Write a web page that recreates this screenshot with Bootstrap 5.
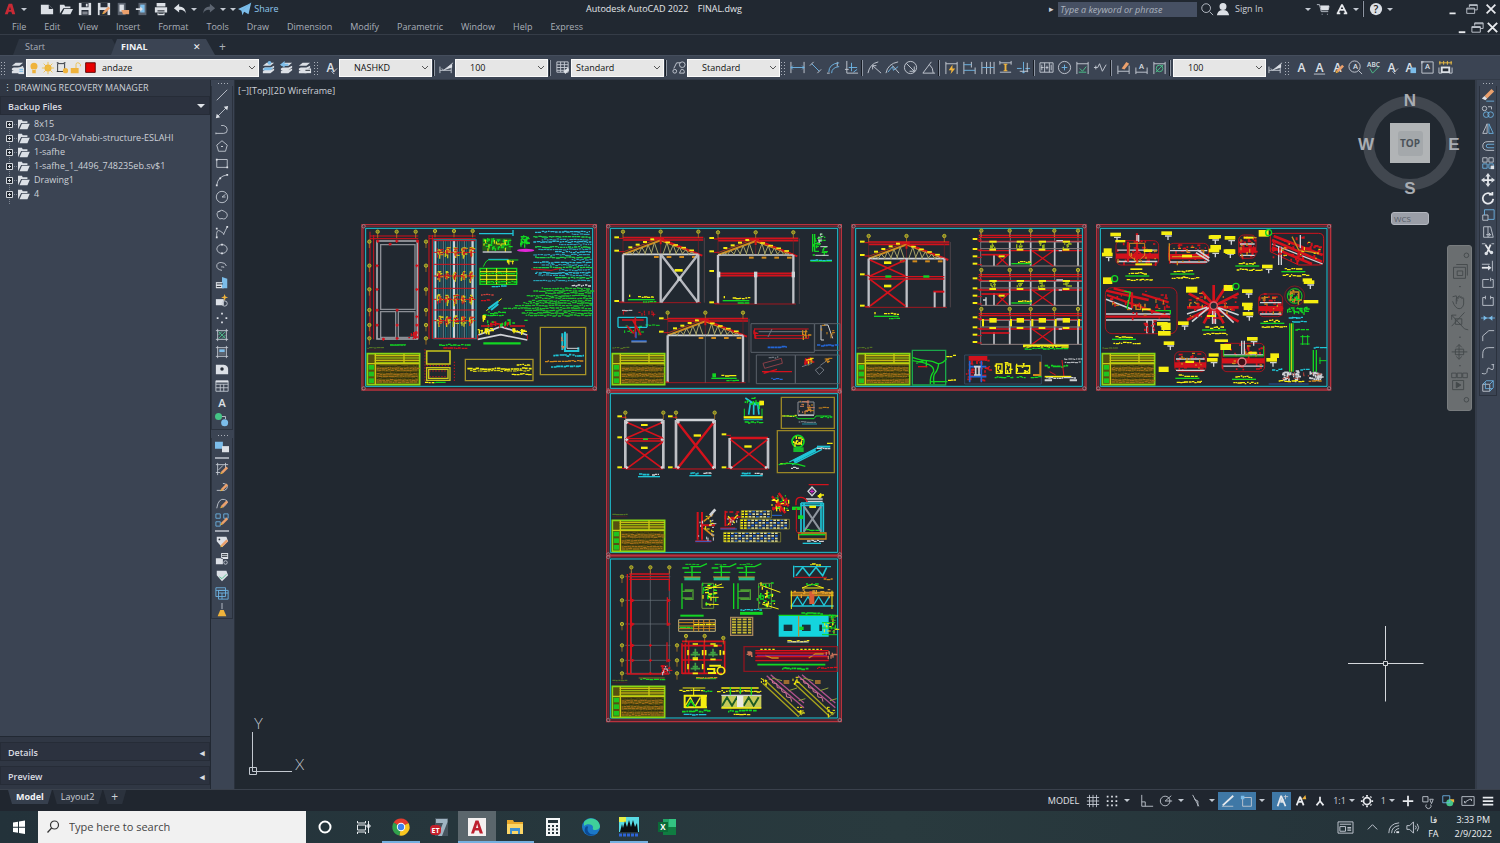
<!DOCTYPE html>
<html lang="en">
<head>
<meta charset="utf-8">
<meta name="viewport" content="width=device-width, initial-scale=1">
<title>Autodesk AutoCAD 2022 - FINAL.dwg</title>
<link href="https://cdn.jsdelivr.net/npm/bootstrap@5.3.0/dist/css/bootstrap.min.css" rel="stylesheet">
<style>
:root{--ink:#212831;--panel:#3b4453;--bar:#303744;--txt:#cdd1d8;--dim:#a9afb9}
body{font:9px/14px "Open Sans","Noto Sans",sans-serif;background:var(--ink);color:var(--txt);overflow:hidden}
button{border:0;background:none;color:inherit;padding:0;font:inherit;display:flex;align-items:center;justify-content:center;flex:none}
svg{display:block;overflow:visible}
a{color:inherit;text-decoration:none}
.ic{width:15px;height:15px;fill:none;stroke:#c3c9d2;stroke-width:1}
.ic .b{stroke:#6db3e3}.ic .y{stroke:#edbe45}.ic .g{stroke:#4dc08a}.ic .k{stroke:#20262f}.ic .W{stroke:#e8eaee;stroke-width:2}
.ic .fw{fill:#dce0e6;stroke:none}.ic .fb{fill:#7cbdea;stroke:none}.ic .fy{fill:#efb33c;stroke:none}.ic .fg{fill:#45c486;stroke:none}.ic .fr{fill:#c92a35;stroke:none}.ic .fk{fill:#262d38;stroke:none}.ic .fd{fill:#5c6470;stroke:none}.ic .fo{fill:#eba06c;stroke:none}
.ic text{fill:#dce0e6;stroke:none;font:600 13px "Open Sans",sans-serif;text-anchor:middle}
.ic text.ts{font-size:8px}
.title-row{height:18px}.title-row .ic{width:14px;height:14px}
.title-text{color:#e4e7eb;white-space:pre}
.qa{width:19px;height:18px}.car{width:10px;height:18px}
.status .car{width:12px}
.car::after{content:"";border:3px solid transparent;border-top-color:#c3c9d2;border-bottom:0}
.kw{width:139px;height:15px;background:#465063;border:0;font-style:italic;color:#cdd1d8;padding:0 2px}
.kw::placeholder{color:#adb4bf;opacity:1}
.menu-row{height:17px;border-bottom:1px solid #353c47;gap:18px;padding:2px 0 0 12px;color:var(--dim)}
.tab-row{height:20px;background:#222933}
.file-tab{height:16px;width:108px;margin-left:13px;background:#2d3541;clip-path:polygon(6px 0,calc(100% - 9px) 0,100% 100%,0 100%);padding-left:12px;color:#a9afb9}
.file-tab.on{width:104px;margin-left:-10px;background:var(--panel);color:#f1f3f6;font-weight:700;padding-left:10px;padding-right:14px}
.add{font-size:12px;color:#a9afb9;height:16px;line-height:16px}
.tool-row{height:25px;background:var(--panel);border-top:1px solid #454e5d;border-bottom:1px solid #333b48}
.tb{width:18px;height:18px}
.grip{width:8px;height:14px;flex:none;background:radial-gradient(circle,#aab0ba 0 1px,transparent 1px) 0 0/3px 3px;background-clip:content-box;padding:1px 1px 0}
.vsep{width:5px;height:16px;flex:none;background:linear-gradient(#171c24,#171c24) 1px 0/1px 100% no-repeat,linear-gradient(#8d95a2,#8d95a2) 2px 0/1px 100% no-repeat}
.combo{width:93px;height:18px;border:1px solid #fafafa;border-radius:0;color:#111;padding:0 10px 0 18px;appearance:none;flex:none;background:#e6e6e6 url("data:image/svg+xml,%3Csvg xmlns='http://www.w3.org/2000/svg' viewBox='0 0 8 8'%3E%3Cpath d='M1 2l3 3 3-3' fill='none' stroke='%23555'/%3E%3C/svg%3E") right 2px center/8px no-repeat}
.combo.near{padding-left:4px}
.combo.far{padding-left:14px}
.combo.layer{width:233px;padding-left:75px}
.layer-ic{top:2px;left:1px;pointer-events:none}
.layer-ic .ic{width:14px;height:14px}
.side{width:211px;background:var(--bar);border-right:1px solid #222933;flex:none}
.side h1{font-size:9px;line-height:16px;margin:0;font-weight:400;padding-left:3px;color:#cdd1d8}
.acc{height:19px;background:#2c323f;border:1px solid #262c37;font-weight:600;color:#d9dce2;padding:2px 4px 0 7px;width:100%;justify-content:space-between}
.acc.low{margin-top:5px}
.tree{background:var(--panel);border-bottom:1px solid #222933;padding:2px 0 0 6px;margin:0}
.tree li{height:14px;gap:4px}
.vbar{width:24px;background:var(--panel);border-right:1px solid #2a313c;flex:none}
.vgrid{display:grid;grid-auto-rows:1fr;justify-items:center;width:22px;border:1px solid #2b323e;border-top:0}
.vgrid .ic,.vlist .ic{width:14px;height:14px}
.vlist{width:22px;border:1px solid #2b323e;border-top:0}
.vlist button{height:17px}
.vlist .rule{height:5px}
.dots{width:12px;height:3px;margin:2px auto 1px;background:radial-gradient(circle,#aab0ba 0 1px,transparent 1px) 0 0/3px 3px}
.rbar{width:25px;background:var(--panel);padding-left:2px;border-left:2px solid #343c49;flex:none}
.rbar .vgrid,.rbar .dot-box{width:18px}
.canvas{background:#212830;overflow:hidden}
.vlabel{top:4px;left:3px}
.cube{top:10px;right:13px}
.wcs{top:132px;right:46px;width:38px;height:13px;background:#9a9ea7;border:1px solid #b4b8c0;border-radius:3px;color:#555b66;font-size:8px;justify-content:flex-start;padding-left:2px}
.navp{top:165px;right:3px;width:25px;height:166px;background:#6a6e70;border-radius:3px;border:1px solid #787c7e}
.ucs{left:12px;bottom:12px}
.status{height:22px;border-top:1px solid #3a414c;background:#20262f}
.lay{height:14px;background:#2b323d;padding:0 8px;clip-path:polygon(0 0,100% 0,calc(100% - 4px) 100%,4px 100%)}
.lay.on{background:#363f4d;color:#f1f3f6;font-weight:700}
.lay.more{font-size:12px}
.st{width:19px;height:18px}.st.on{background:#3f78a6}
.sw{width:20px;height:18px}
.st .ic,.sw .ic{width:14px;height:14px}
.tail{padding-right:2px}
.task{height:32px;background:linear-gradient(90deg,#23323a,#293a3e 60%,#243239);color:#eef1f4}
.task .find{background:#f1f1f1;width:268px}
.find input{border:0;background:none;font-size:11px;color:#333;width:200px;outline:0;padding:0 1px}
.find input::placeholder{color:#444;opacity:1}
.app{width:38px;height:32px}
.app.run{border-bottom:2px solid #75b0e0;padding-top:2px}
.app.on{background:#5b666c}
.app svg{width:20px;height:20px}
</style>
</head>
<body class="d-flex flex-column vh-100">
<header>
 <div class="title-row d-flex align-items-center">
  <button class="qa" data-i="logo" aria-label="Application menu"></button><button class="car" aria-label="Menu"></button>
  <div class="d-flex ms-2"><span data-list="qa:new,open,save,saveas,fromweb,toweb,print,undo"></span><button class="car" aria-label="Undo list"></button><button class="qa" data-i="redo" aria-label="Redo"></button><button class="car" aria-label="Redo list"></button><button class="car" aria-label="Customize"></button></div>
  <button style="color:#8fc8f0"><span data-i="share"></span>&nbsp;Share</button>
  <div class="flex-grow-1 text-center title-text">Autodesk AutoCAD 2022    FINAL.dwg</div>
  <div class="d-flex align-items-center">
   <span class="me-1">▸</span><input class="kw" placeholder="Type a keyword or phrase" aria-label="Search help">
   <button class="qa" data-i="mag" aria-label="Search"></button>
   <button class="me-4"><span data-i="user"></span>&nbsp; Sign In</button>
   <button class="car ms-3" aria-label="Account"></button><button class="qa" data-i="cart" aria-label="Store"></button><button class="qa" data-i="apps" aria-label="Apps"></button><button class="car" aria-label="Apps list"></button>
   <span class="vsep"></span><button class="qa" data-i="help" aria-label="Help"></button><button class="car me-5" aria-label="Help list"></button>
   <button class="qa" data-i="min" aria-label="Minimize"></button><button class="qa" data-i="rest" aria-label="Restore"></button><button class="qa" data-i="close" aria-label="Close"></button>
  </div>
 </div>
 <nav class="menu-row d-flex align-items-center">
  <a href="#">File</a><a href="#">Edit</a><a href="#">View</a><a href="#">Insert</a><a href="#">Format</a><a href="#">Tools</a><a href="#">Draw</a><a href="#">Dimension</a><a href="#">Modify</a><a href="#">Parametric</a><a href="#">Window</a><a href="#">Help</a><a href="#">Express</a>
  <div class="d-flex ms-auto"><span data-list="docw:min,rest,close"></span></div>
 </nav>
 <div class="tab-row d-flex align-items-end">
  <a href="#" class="file-tab d-flex align-items-center">Start</a>
  <a href="#" class="file-tab on d-flex align-items-center justify-content-between">FINAL <span class="fw-normal">✕</span></a>
  <button class="add px-1" aria-label="New tab">+</button>
 </div>
 <div class="tool-row d-flex align-items-center">
  <span class="grip"></span><button class="tb" data-i="layers" aria-label="Layer properties"></button>
  <div class="position-relative d-flex"><select class="combo layer" aria-label="Layer"><option>andaze</option></select>
   <div class="layer-ic position-absolute d-flex"><span data-i="bulb"></span><span data-i="sun"></span><span data-i="vpf"></span><span data-i="lock"></span><span data-i="red"></span></div></div>
  <span data-list="tb:lay1,lay2,lay3"></span><span class="grip"></span><button class="tb" data-i="tstyle" aria-label="Text style"></button>
  <select class="combo far" aria-label="Text style"><option>NASHKD</option></select><span class="vsep"></span><button class="tb" data-i="dstyle" aria-label="Dimension style"></button>
  <select class="combo far" aria-label="Dimension style"><option>100</option></select><span class="vsep"></span><button class="tb" data-i="table2" aria-label="Table style"></button>
  <select class="combo near" aria-label="Table style"><option>Standard</option></select><span class="vsep"></span><button class="tb" data-i="ml" aria-label="Multileader style"></button>
  <select class="combo far" aria-label="Multileader style"><option>Standard</option></select><span class="grip"></span>
  <span data-list="tb:dlin,dali,darc,dord"></span><span class="vsep"></span><span data-list="tb:drad,djog,ddia,dang"></span><span class="vsep"></span>
  <span data-list="tb:dq,dbase,dcont,dspace,dbreak"></span><span class="vsep"></span><span data-list="tb:tol,cmark,insp,jogl"></span><span class="vsep"></span><span data-list="tb:dedit,dtext,dupd"></span><span class="vsep"></span>
  <select class="combo far" aria-label="Dimension style control"><option>100</option></select><button class="tb" data-i="dstyle" aria-label="Dimension style manager"></button><span class="grip"></span>
  <span data-list="tb:ta,ta2,tedit,tfind,spell,tstyle,tscale,tjust,tspace"></span>
 </div>
</header>

<main class="d-flex flex-grow-1" style="min-height:0">
 <aside class="side d-flex flex-column">
  <h1>⋮ DRAWING RECOVERY MANAGER</h1>
  <button class="acc">Backup Files <svg width="8" height="5"><path d="M0 0h8L4 4z" fill="#e0e3e8"/></svg></button>
  <ul class="tree list-unstyled flex-grow-1" id="tree"></ul>
  <button class="acc low">Details <span>◂</span></button>
  <button class="acc low mb-1">Preview <span>◂</span></button>
 </aside>
 <div class="vbar">
  <div class="dots"></div>
  <div class="vgrid" style="height:344px"><span data-list="v:line,xline,pline,poly,rect,arc,circ,cloud,spl,ell,earc,blk,mkblk,pts,hatch,grad,region,table,ta,addsel"></span></div>
  <div class="dots mt-1"></div>
  <div class="vlist"><span data-list="v:order,hr,eh,ep,es,ea,hr,ta1,bl,ta3,ta4,broom"></span></div>
 </div>
 <section class="canvas flex-grow-1 position-relative">
  <svg id="dwg" class="w-100 h-100" viewBox="235 80 1240 709" role="img" aria-label="Structural drawing sheets"></svg>
  <div class="vlabel position-absolute">[−][Top][2D Wireframe]</div>
  <svg class="cube position-absolute" width="104" height="106" viewBox="1358 90 104 106" font-family="Liberation Sans" font-weight="700" font-size="17" fill="#a9adb3" text-anchor="middle">
   <circle cx="1410" cy="143" r="41.500" fill="none" stroke="#41474f" stroke-width="11"/>
   <rect x="1390" y="123" width="40" height="40" fill="#b1b4b6"/><rect x="1398" y="131" width="25" height="25" rx="3" fill="#a4a8ab"/>
   <text x="1410" y="147" font-size="10" fill="#4b5259" font-family="Open Sans">TOP</text>
   <text x="1410" y="106">N</text><text x="1410" y="194">S</text><text x="1366" y="150">W</text><text x="1454" y="150">E</text></svg>
  <button class="wcs position-absolute">WCS</button>
  <svg class="navp position-absolute" viewBox="0 0 25 166" fill="none" stroke="#44494b" aria-label="Navigation bar">
   <circle cx="20" cy="4" r="2.500"/><path d="M6 17h13v12H6zM9 14h12v12M10 21h6v5h-6zM12 38h2M5 49l4-1 1 6M9 57V51q2-2 2 0v-2q2-2 2 0v1q2-2 2 0v1q2-2 2 0v6q-1 5-5 5t-7-8M4 69l14 15M18 66L4 81M4 69v5M4 69h5M18 84l4 1M8 73h7v6H8zM12 93h2M4 109h17M12 101v16M9 104l3-3 3 3M9 114l3 3 3-3M8 106h9v6H8zM12 124h2M4 132h5v5H4zM10 132h5v5h-5zM16 132h5v5h-5zM5 140h12v10H5z"/><path d="M9 142l5 3-5 3z" fill="#44494b"/><circle cx="20" cy="161" r="2.500"/></svg>
  <svg class="ucs position-absolute" width="62" height="60" viewBox="247 717 62 60" stroke="#c3c9d0" fill="none"><path d="M252.500 732v39.500H292M249.500 767.500h7v7h-7z"/><g fill="#c3c9d0" stroke="none" font-size="15" font-family="Lato" font-weight="300"><text x="254" y="729">Y</text><text x="295" y="770">X</text></g></svg>
 </section>
 <div class="rbar"><div class="dot-box"><div class="dots"></div></div><div class="vgrid" style="height:310px"><span data-list="v:erase,copy,mirror,offset,array,move,rotate,scale,stretch,trim,extend,brk1,brk2,join,chamfer,fillet,blend,explode"></span></div></div>
</main>

<footer>
 <div class="status d-flex">
  <div class="d-flex ps-1" style="gap:1px"><a href="#" class="lay on ms-1 ps-2 pe-2">Model</a><a href="#" class="lay">Layout2</a><a href="#" class="lay more" aria-label="New layout">+</a></div>
  <div class="tail d-flex align-items-center ms-auto">
   <span class="me-1" style="color:#e0e3e8">MODEL</span><span data-list="st:sgrid,ssnap"></span><button class="car me-1" aria-label="Snap list"></button><span data-list="st:ortho,polar"></span><button class="car" aria-label="Polar list"></button><span data-list="st:iso"></span><button class="car" aria-label="Isoplane list"></button><button class="st on" data-i="otrack" aria-label="Object snap tracking"></button><button class="st on" data-i="osnap" aria-label="Object snap"></button><button class="car me-1" aria-label="Snap modes"></button><button class="st on" data-i="ann1" aria-label="Annotation visibility"></button><span data-list="st:ann2,ann3"></span><span class="ms-1">1:1</span><button class="car" aria-label="Scale list"></button><button class="st" data-i="gear" aria-label="Workspace"></button><span class="ms-1">1</span><button class="car" aria-label="Units list"></button><span data-list="sw:plus,isol,perf,clean,burger"></span>
  </div>
 </div>
 <div class="task d-flex align-items-stretch">
  <button class="app" aria-label="Start"><svg viewBox="0 0 20 20"><path fill="#fff" d="M4 5.500l5-.8v5H4zM10 4.500l6-1v6.200h-6zM4 10.700h5v5l-5-.8zM10 10.700h6V17l-6-1z"/></svg></button>
  <label class="find d-flex align-items-center"><svg width="14" height="14" viewBox="0 0 14 14" class="mx-2" fill="none" stroke="#333" stroke-width="1.200"><circle cx="8.500" cy="5" r="4"/><path d="M5.600 8L1.500 12.500"/></svg><input placeholder="Type here to search" aria-label="Type here to search"></label>
  <button class="app" aria-label="Cortana"><svg viewBox="0 0 20 20" fill="none" stroke="#fff" stroke-width="2"><circle cx="10" cy="10" r="5.500"/></svg></button>
  <button class="app" aria-label="Task view"><svg viewBox="0 0 20 20" fill="none" stroke="#e8ecef"><path d="M4.500 8h8v5h-8zM4.500 4v2h8V4M4.500 17v-2h8v2M15.500 4v12M14 8h3v2h-3z"/></svg></button>
  <button class="app run" aria-label="Chrome"><svg viewBox="0 0 20 20"><path fill="#e33b2e" d="M10 10L2.600 5.600A8.600 8.600 0 0 1 17.500 6z"/><path fill="#31a24c" d="M10 10l-1.500 8.600A8.600 8.600 0 0 1 2.600 5.600z"/><path fill="#f8c620" d="M10 10l7.500-4A8.600 8.600 0 0 1 8.500 18.600z"/><circle cx="10" cy="10" r="4.200" fill="#fff"/><circle cx="10" cy="10" r="3.200" fill="#3f82ee"/></svg></button>
  <button class="app" aria-label="ETABS"><svg viewBox="0 0 20 20"><path fill="#46545e" d="M6 1h13v18H6z"/><path fill="#9fb4c2" d="M7 2h11.500v3L13 19H9l5-13H7z"/><rect x="1" y="8" width="11" height="10" rx="4" fill="#c4202c"/><text x="6.500" y="15.500" font-size="7" font-weight="700" fill="#fff" text-anchor="middle">ET</text></svg></button>
  <button class="app run on" aria-label="AutoCAD"><svg viewBox="0 0 20 20"><rect x="1" y="1" width="18" height="18" fill="#f4f0f0"/><path d="M4 16.500L8.500 3.500h3L16 16.500h-3.200l-1-3H8l-1 3zM9 11h2.300L10.200 7z" fill="#bd1f2e" fill-rule="evenodd"/></svg></button>
  <button class="app run" aria-label="File Explorer"><svg viewBox="0 0 20 20"><path fill="#e8a92c" d="M2 3h6l1 2h9v12H2z"/><path fill="#fcd667" d="M2 7h16v10H2z"/><path fill="#3f8fd0" d="M5 11h10v6h-2v-3H7v3H5z"/></svg></button>
  <button class="app" aria-label="Calculator"><svg viewBox="0 0 20 20"><path fill="#f4f6f7" d="M3 1h14v18H3z"/><path stroke="#25343b" stroke-width="2" stroke-dasharray="2 2" d="M5 9h11M5 12.500h11M5 16h11"/><path fill="#25343b" d="M5 3h10v3H5z"/></svg></button>
  <button class="app" aria-label="Edge"><svg viewBox="0 0 20 20"><circle cx="10" cy="10" r="9" fill="#1b78c8"/><path fill="#3fcf9a" d="M3 5a9 9 0 0 1 16 4c0 3-3 4-5 4-3 0-2-2-2-3 0-3-6-4-9-1z"/><path fill="#0c4a94" d="M7 10c-2 5 3 9 8 7-6 4-13 0-11-6 1-2 3-2 3-1z"/></svg></button>
  <button class="app run" aria-label="SAP"><svg viewBox="0 0 20 20"><path fill="#59dbe4" d="M0 0h20v15H0z"/><path fill="#e6ef47" d="M0 0h7v5H0z"/><path fill="#0b0f12" d="M1 15l2-8 1 4 2-7 2 6 2-7 2 7 2-7 2 7 2-4 1 9z"/><path stroke="#2d63d6" stroke-width="3" stroke-dasharray="3 1" d="M0 18h20"/></svg></button>
  <button class="app" aria-label="Excel"><svg viewBox="0 0 20 20"><path fill="#21a366" d="M6 2h13v16H6z"/><path fill="#107c41" d="M6 10h13v8H6z"/><path fill="#33c481" d="M12 2h7v8h-7z"/><rect x="1" y="5" width="10" height="10" fill="#0b6a37"/><text x="6" y="13" font-size="8" font-weight="700" fill="#fff" text-anchor="middle">X</text></svg></button>
  <div class="d-flex align-items-center ms-auto gap-1 pe-2 text-center">
   <button class="qa me-1" data-i="news" aria-label="News"></button><button class="qa" data-i="up" aria-label="Hidden icons"></button><button data-i="wifi" aria-label="Network"></button><button data-i="vol" aria-label="Volume"></button>
   <span class="mx-1">فا<br>FA</span><span class="ms-2">3:33 PM<br>2/9/2022</span>
  </div>
 </div>
</footer>

<script src="https://cdn.jsdelivr.net/npm/bootstrap@5.3.0/dist/js/bootstrap.bundle.min.js"></script>
<script>
// Toolbar icons on a 16-unit grid, "class:path" layers separated by "|"; t and ts are letters.
const c=(x,y,r)=>`M${x-r} ${y}a${r} ${r} 0 1 0 ${2*r} 0a${r} ${r} 0 1 0 ${-2*r} 0`;
const pencil='fo:M7 11l6-6 2 2-6 6z|fy:M6 14l1-3 2 2z|', stack='fw:M2 6l4-3h8l-4 3zM2 9l2-1h6l4-2v2l-4 3H2zM2 12l2-1h6l4-2v2l-4 3H2z|';
const I={
logo:'fr:M2 14L6.500 2h4L14 14h-3.500l-1-3H6.500l-1 3zM7 9h2L8 5z',new:'fw:M1 3h9l5 5v6H1z|fk:M10 3v5h5z',open:'fw:M1 13V3h5l1 2h6v2H5zM6 8h10l-3 6H3z',
save:'fw:M1 1h14v14H1z|fk:M4 1h8v5H4zM4 9h8v6H4z|fw:M9 2h2v3H9zM5 11h6v1H5zM5 13h6v1H5z',saveas:'fw:M1 1h14v14H1z|fk:M4 1h8v5H4zM3 9h9v6H3z|'+pencil,
fromweb:'fd:M2 1h9v14H2z|fw:M4 3h5v8H4z|fo:M6 9h9v5H8z',toweb:'fd:M4 1h9v14H4z|fb:M6 3h5v9H6z|fw:M1 7h5V5l3 3-3 3V9H1z',print:'fw:M3 1h10v4H3zM1 6h14v6H1zM4 11h8v4H4z|k:M4 10h8M5 13h6',
undo:'fw:M1 7l6-5v3q7 0 8 8-3-5-8-4v3z',redo:'fd:M15 7L9 2v3Q2 5 1 13q3-5 8-4v3z',share:'fb:M0 8L15 1l-3 13-5-3-2 4-1-5z|b:M4 10L15 1',
mag:'w:'+c(7,7,5)+'M11 11l4 4',user:'fw:'+c(8,5,4)+'M1 15q1-6 7-6t7 6z',cart:'w:M1 3h3l2 8h8M5 5h10l-1 4H6M6.500 14h1M12.500 14h1|fw:M5 4h10l-1 5H6z',apps:'W:M8 3L3 13M8 3l5 10M2 13h4M10 13h4M6 9h4',
help:'fw:'+c(8,8,7)+'|qs:?',min:'W:M4 13h7',rest:'w:M5 6V3h9v6h-3M2 7h9v6H2zM5 4h9M2 8h9',close:'W:M3 3l10 10M13 3L3 13',
layers:stack+'fw:M9 8h6v7H9z|b:M10 10h4M10 12h4',lay1:stack+'fb:M4 8h9l-3 3H2z|fb:'+c(9,3,2),lay2:stack+'fb:M1 5l5-4v3h4v2H6v2z',lay3:stack+'fw:M8 9h7v5H8z|k:M9 11h5',
bulb:'fy:'+c(8,6,4)+'M6 9h4v5H6z',sun:'fy:'+c(8,8,4)+'|y:M8 1v14M1 8h14M3 3l10 10M13 3L3 13',vpf:'k:M3 3h8v9H3zM2 2h2M10 2h2M2 12h2|fy:'+c(12,11,3),lock:'fy:M2 8h9v6H2z|y:M8 8V4q0-2 2-2t3 2v2',red:'rd:M3 2h11v11H3z',
tstyle:'t:A|w:M11 13l4-4M9 12l3 3',dstyle:'w:M1 7v7M1 11h12M5 11l10-8M13 6v8M3 9l2 2|fw:M5 11l9-7v4z',table2:'w:M2 2h12v11H2zM2 5h12M2 8h12M2 11h12M6 2v11M10 2v11|fw:M9 12l5-4 1 3-4 4z',ml:'w:'+c(4,12,2)+c(12,5,3)+'M3 9l3-6h4M11 10q4 0 3 4H9z',
dlin:'w:M1 2v12M15 2v12|b:M1 8h14M3 6L1 8l2 2M13 6l2 2-2 2',dali:'w:M2 6l4-4M10 14l4-4|b:M4 4l8 8',darc:'w:M1 14h3M12 2v5|b:M3 13Q3 4 14 3M6 14q0-6 8-7',dord:'w:M3 1v13h12M1 10h4|b:M8 3v9M5 8h9M10 13l4-3',
drad:'w:M1 14Q3 4 12 2M6 6l9 8M6 10V6h4',djog:'w:M1 14Q3 4 14 2|b:M3 13l5-6 1 4 5-4|w:M8 6l7 8',ddia:'w:'+c(8,8,6.5)+'M3.500 3.500l9 9M7 12h5V7',dang:'w:M2 14h13M2 14L11 2M9 5q4 3 4 9',
dq:'w:M2 2v13M14 2v13M2 4h12|fy:M9 5L5 11h3l-1 4 5-6H9z',dbase:'w:M2 2v13M10 2v6M14 8v7|b:M2 5h8M2 11h12',dcont:'w:M2 2v13M7 2v13M11 2v13M15 2v13|b:M2 8h13',dspace:'w:M2 3h12M2 13h12M2 1v4M14 1v4|fy:M6 4h4v1H9v6h1v1H6v-1h1V5H6z',dbreak:'b:M1 9h5M10 9h5M8 2v12M6 12l2 2 2-2|w:M12 3v10M4 12h9',
tol:'w:M1 3h14v10H1zM6 3v10M11 3v10M3 5v6M2 8h3M13 5v6M7 8h3M8.500 6v4',cmark:'w:'+c(8,8,6.5)+'|b:M8 5v6M5 8h6',insp:'w:M2 2v13M14 2v13M2 4h12|g:M5 9l3 3 4-5M4 13h8',jogl:'w:M1 8h4l2-4 3 8 4-7M3 6v4',dedit:'w:M2 6v9M14 6v9M2 12h12|fo:M6 9l5-7 3 2-5 6z',dtext:'w:M2 8v7M14 8v7M2 13h12|ts:A',dupd:'w:M2 2v13M14 2v13M2 4h12|g:'+c(8,9,3.5)+'M4 13l8-8',
ta:'t:A',ta2:'t:A|w:M2 15h12',tedit:'t:A|'+pencil,tfind:'w:'+c(7,7,6)+'M11 11l4 4|ts:A',spell:'abc:ABC|g:M4 9l3 5 7-7',tscale:'t:A|fb:M9 8h6v6H9z',tjust:'w:M2 2h12v12H2zM1 2h3M2 1v3|ts:A',tspace:'y:M1 3h14M2 1v4M6 1v4M10 1v4M14 1v4|fw:M3 7h10v7H3z|fk:M5 9h6v3H5z|w:M1 8v6h3M15 8v6h-3',
line:'w:M2 14L14 2',xline:'w:M2 14L14 2|fw:M1 15l1-5 4 4zM15 1l-1 5-4-4z',pline:'w:M1 13h9q4 0 4-4T10 4H7M1 12v2',poly:'w:M8 2l6 5-2 7H4L2 7z|fw:M7 8h2v1H7z',rect:'w:M2 4h12v9H2z|fw:M1 3h2v2H1zM13 12h2v2h-2z',arc:'w:M2 14Q3 4 14 2|fw:M1 13h2v2H1zM13 1h2v2h-2zM5 5h2v2H5z',circ:'w:'+c(8,8,6.5)+'M8 8l4-3M8 8h4',
cloud:'w:M4 4q4-3 7 0 4 2 3 5-2 5-6 3-3 2-5-2-2-4 1-6zM3 4h3',spl:'w:M2 14Q1 4 6 7t4 4 4-9|fw:M1 3h2v2H1zM13 1h2v2h-2zM1 13h2v2H1z',ell:'w:M2 8q1-5 6-5t6 5q-1 5-6 5T2 8z|fw:M7 2h2v2H7zM7 12h2v2H7z',earc:'w:M13 8q-1-4-6-4T2 8t6 5M7 9h3v1',
blk:'fw:M1 7h9v7H1z|fb:M8 1l6 2v11h-6z|k:M2 9h7M2 12h5',mkblk:'fw:M1 7h9v7H1z|fy:M11 1l1 3 3 1-3 1-1 3-1-3-3-1 3-1z|w:'+c(11,12,3),pts:'fw:M7 2h2v2H7zM2 7h2v2H2zM12 7h2v2h-2zM7 12h2v2H7z',
hatch:'w:M3 1v14M13 1v14M1 3h14M1 13h14|g:M4 12l8-8M4 8l4-4M8 12l4-4M4 4l8 8',grad:'w:M3 1v14M13 1v14M1 3h14M1 13h14|fd:M4 4h8v8H4z|fb:M5 5h6v3H5z',region:'fw:M1 3h9q5 1 5 5v6H1z|fk:'+c(8,8,2),table:'w:M1 2h14v12H1zM1 6h14M1 10h14M6 6v8M10 6v8|fw:M1 2h14v2H1z',addsel:'fg:'+c(4,4,4)+'|fb:'+c(11,11,4)+'|w:M8 4h4v3',
order:'fb:M0 2h9v8H0z|fw:M8 7h8v7H8z',hr:'hrr:M0 8h16',eh:'w:M3 1v14M12 1v7M1 3h14M1 12h5M4 9l5-5|'+pencil,ep:'w:M2 13h9q4-2 3-5t-5-3|'+pencil,es:'w:M2 14q2-12 9-10t-2 9|'+pencil,ea:'b:M1 1h5v5H1zM10 1h5v5h-5zM1 10h5v5H1z|'+pencil,
ta1:'fw:M2 2h11l2 5-7 7-6-7z|fk:'+c(5,5,1)+'|'+pencil,bl:'fw:M1 7h8v7H1zM7 1h8v7H7z|k:M8 3h6M8 5h6|w:'+c(12,12,2),ta3:'fw:M2 2h11l2 5-7 7-6-7z|g:M5 9l3 2 5-5',ta4:'b:M1 2h11v10H1zM4 5h11v10H4zM1 5h11M4 8h11M8 8v7',broom:'w:M8 0v7|fy:M6 8h4l3 7H3z',
erase:'fo:M4 9l8-8 3 3-8 8z|fw:M1 12l3-3 3 3-2 2z|b:M6 15h9',copy:'w:'+c(4,4,2.5)+'M8 2h4v3|b:'+c(6,11,3.2)+c(11,11,3.2),mirror:'w:M7 2v11H2z|b:M9 2v11h5z',offset:'w:M15 3H8q-6 0-6 5t6 5h7|b:M15 6H8q-2 0-2 2t2 2h7',array:'w:M2 2h5v5H2zM9 2h5v5H9z|b:M2 9h5v5H2zM9 9h5v5H9z|fw:M11 11h4v4h-4z',
move:'W:M8 2v12M2 8h12|fw:M8 0l3 4H5zM8 16l3-4H5zM0 8l4-3v6zM16 8l-4-3v6z',rotate:'W:M12 4A6 6 0 1 0 14 9M9 4h4v-3',scale:'b:M4 2h11v11|w:M2 8h6v6H2z|b:M4 8V2M8 13h7',stretch:'w:M3 2h5v12H3zM8 2l3 0 3 12H8M6 11h5M9 9l2 2-2 2',trim:'W:M5 3l6 9M11 3l-4 9|w:M1 2h4M12 2h3|fw:'+c(6,13,2)+c(12,12,2),extend:'w:M13 2v12|W:M1 10h9|fw:M8 7l4 3-4 3z|w:M1 6h9',
brk1:'w:M9 4H2v9h12V4h-2M11 2v4',brk2:'w:M5 4H2v9h12V4h-3M5 2v4M11 2v4',join:'b:M0 8h16|fb:M3 5l4 3-4 3zM13 5L9 8l4 3z',chamfer:'w:M2 15V9l7-6h6',fillet:'w:M2 15V10q0-7 7-7h6',blend:'w:M1 13q6 2 6-3t4-2 3-5M12 3h3',explode:'w:M2 6h8v8H2z|b:M2 6l4-4h8v8l-4 4M10 6l4-4M5 4v7h8',
sgrid:'w:M4 1v14M8 1v14M12 1v14M1 4h14M1 8h14M1 12h14',ssnap:'fw:M2 2h2v2H2zM7 2h2v2H7zM12 2h2v2h-2zM2 7h2v2H2zM7 7h2v2H7zM12 7h2v2h-2zM2 12h2v2H2zM7 12h2v2H7zM12 12h2v2h-2z',ortho:'w:M2 1v13h13M2 9h4v5',polar:'w:'+c(7,8,5.5)+'M7 8l7-6M7 8h8',iso:'w:M3 1l7 13M5 6l4 2M9 8v6',otrack:'W:M2 13L14 2|w:M1 14h13',osnap:'w:M3 4h10v10H3z|fb:M1 2h4v4H1z',
ann1:'W:M7 2L3 14M7 2l5 12|fw:M6 6h4v4H6z|w:M12 1v5M10 3h5',ann2:'W:M7 3L3 13M7 3l4 10M5 9h4|fy:M13 1l-4 5h5z',ann3:'W:M8 3v5L4 13M8 8l4 5',gear:'W:'+c(8,8,4)+'|W:M8 1v2M8 13v2M1 8h2M13 8h2M3 3l1 1M12 12l1 1M13 3l-1 1M4 12l-1 1',plus:'W:M8 2v12M2 8h12',isol:'w:M2 3h6v6H2zM10 6l4 0-2 5zM6 12a3 3 0 1 0 5 0',perf:'fg:'+c(10,10,4)+'|b:M2 2h8v8H2z|fy:M10 6h5v4z',clean:'w:M1 3h14v10H1zM4 10V8M4 10h2M12 6v2M12 6h-2M5 9l5-3',burger:'W:M2 4h12M2 8h12M2 12h12',
news:'w:M0 2h16v12H0zM2 7h6v5H2zM2 4.500h12M10 8h4M10 11h4M10 9.500h4',up:'w:M3 10l5-5 5 5',wifi:'w:M3 14Q3 4 14 3M6 14q0-7 8-8M9 14q0-4 5-5|fw:M11 12h3v2h-3z',vol:'w:M2 6h3l4-4v12l-4-4H2zM11 6q2 2 0 4M13 4q3 4 0 8'};
const text={t:[8,13,''],ts:[8,10,'ts'],abc:[8,7,'ts'],qs:[8,12,'ts']};
function svg(n){return `<svg class="ic" viewBox="0 0 16 16" aria-hidden="true">`+I[n].split('|').filter(Boolean).map(s=>{const k=s.indexOf(':'),a=s.slice(0,k),d=s.slice(k+1);
 if(text[a])return `<text x="${text[a][0]}" y="${text[a][1]}" class="${text[a][2]}"${a=='qs'?' style="fill:#222;font-size:12px"':a=='abc'?' style="font-size:7px"':''}>${d}</text>`;
 if(a=='rd')return `<path d="${d}" fill="#e80000" stroke="#500"/>`; if(a=='hrr')return `<path d="${d}" stroke-width="2" stroke="#aeb4be"/>`;
 return `<path class="${a}" d="${d}" fill-rule="evenodd"/>`}).join('')+'</svg>'}
document.querySelectorAll('[data-list]').forEach(e=>{const [k,l]=e.dataset.list.split(':');const cl={qa:'qa',tb:'tb',st:'st',sw:'sw',v:'w-100',docw:''}[k];
 e.outerHTML=l.split(',').map(n=>`<button class="${cl}${n=='hr'?' rule':''}" aria-label="${n}">${svg(n)}</button>`).join('')});
document.querySelectorAll('[data-i]').forEach(e=>e.innerHTML=svg(e.dataset.i)+e.innerHTML);
document.getElementById('tree').innerHTML=['8x15','C034-Dr-Vahabi-structure-ESLAHI','1-safhe','1-safhe_1_4496_748235eb.sv$1','Drawing1','4'].map(t=>`<li class="d-flex align-items-center"><svg width="7" height="7" viewBox="0 0 7 7"><path d="M.5.500h6v6h-6zM2 3.500h3M3.500 2v3" fill="#20262f" stroke="#d4d8de"/><path d="M3.500 8v6M8 3.500h3" stroke="#7d8591" stroke-dasharray="1 1"/></svg><svg width="13" height="11" viewBox="0 0 16 14"><path d="M1 13V1h5l1 2h6v2H5zM6 6h10l-3 7H3z" fill="#dce0e6"/></svg>${t}</li>`).join('');

// Drawing sheets. Every sheet is drawn in thirds of a screen unit.
let seed=7;const rnd=()=>(seed=(seed*16807)%2147483647)/2147483647;
const R='#d3121c',Y='#f6ee10',G='#12d622',C='#1fc5d6',Wt='#cfd2d6',Gy='#6d747d',O='#d08a1c',M='#e326d8',Bl='#2467d8';
const P=(d,s,w=3,f='none')=>`<path d="${d}" stroke="${s}" stroke-width="${w}" fill="${f}"/>`;
const B=(x,y,X,Y2,s,w=3,f)=>P(`M${x} ${y}H${X}V${Y2}H${x}z`,s,w,f);
const F=(x,y,X,Y2,f)=>B(x,y,X,Y2,'none',0,f);
// a line of lettering too small to read
function N(x,y,X,s,h=5,w=4){let d='';for(let a=x;a<X;){const l=4+rnd()*8;d+=`M${a|0} ${y+(rnd()-.5)*h*.6|0}h${l|0}`;if(rnd()<.4)d+=`v${(rnd()-.5)*h|0}`;a+=l+rnd()*2}return P(d,s,w)}
// a patch of dense detail
function D(x,y,X,Y2,s,n=20,w=3){let d='';for(let i=0;i<n;i++){const a=x+rnd()*(X-x-5),b=y+rnd()*(Y2-y-5);d+=`M${a|0} ${b|0}${rnd()<.5?'h':'v'}${4+rnd()*9|0}`}return P(d,s,w)}
const bub=(x,y)=>`<circle cx="${x}" cy="${y}" r="5" stroke="#b9b52a" stroke-width="3" fill="#7d7b28"/>`+P(`M${x} ${y+5}v14`,O,2);
const bubs=(l)=>l.map(p=>bub(...p)).join('');
const lab=(x,y,X)=>N(x+30,y-7,X-2,Y,6)+P(`M${x} ${y}H${X}`,G,4)+N(x+45,y+7,X,G,3);
const yt=(x,y,w=18,h=7)=>F(x,y,x+w,y+h,Y);
const frame=(x,y,X,Y2)=>B(x,y,X,Y2,'#b9323d',4)+B(x+5,y+5,X-5,Y2-5,'#8a2430',3)+B(x+11,y+11,X-11,Y2-11,C,3)+[[x+5,y+5],[X-5,y+5],[x+5,Y2-5],[X-5,Y2-5]].map(p=>`<circle cx="${p[0]}" cy="${p[1]}" r="5" fill="none" stroke="#9aa0a8" stroke-width="2"/>`).join('');
function tblock(x,y){let s=F(x,y,x+157,y+93,'#57500f')+B(x,y,x+157,y+93,'#86d814',5);for(let i=0;i<4;i++)s+=P(`M${x+22} ${y+6+i*7}H${x+157}`,i%2?'#a3d010':'#e3d313',3);
 for(let i=0;i<9;i++)s+=N(x+28,y+38+i*6,x+150,i%3?'#b0701c':'#2b2a14',4,3);s+=P(`M${x+24} ${y}V${y+93}M${x} ${y+30}H${x+157}M${x+110} ${y}v28`,'#c8c812',4);for(let i=0;i<3;i++)s+=F(x+4,y+34+i*20,x+20,y+48+i*20,'#1fc21f');return s+N(x,y-17,x+44,'#5c8024',4,3)+P(`M${x} ${y-11}h45`,'#5c1d24',2)}
// a pitched roof truss between x and X, apex above the middle
function truss(x,X,y,ap){const m=(x+X)/2;let s=P(`M${x} ${y}L${m} ${ap}L${X} ${y}`,O,6)+P(`M${m} ${ap-4}L${X+12} ${y+4}`,R,6)+P(`M${x} ${y-7}L${m} ${ap-7}`,'#a4301c',3)+P(`M${x} ${y}H${X}`,Wt,5);
 let d='';for(let i=1;i<6;i++){const a=x+(m-x)*i/6,b=y-(y-ap)*i/6,e=X-(X-m)*i/6;d+=`M${a} ${b}L${a+12} ${y}M${e} ${b}L${e-12} ${y}M${a} ${b}L${a-10} ${y}M${e} ${b}L${e+10} ${y}`}
 s+=P(d,'#a9a468',3);for(let i=0;i<4;i++)s+=yt(x+16+i*22,y-24-i*8,12,6)+P(`M${m+14+i*24} ${ap+6+i*8}h14`,Y,5)+P(`M${m-20+i*38} ${y+8}h14`,O,6);return s+P(`M${m-20} ${ap-6}h30M${m} ${ap}v12`,R,6)}
const col=(x,y,Y2,w=7)=>P(`M${x} ${y}V${Y2}`,'#bfc1c6',w);
const X=(x,y,a,b,s=R,w=5)=>P(`M${x} ${y}L${a} ${b}M${a} ${y}L${x} ${b}`,s,w);
const tags=(x,ys)=>ys.map(y=>yt(x,y,14,6)+P(`M${x+14} ${y+6}h14`,R,3)).join('');
const nodes=(l,s=R)=>l.map(([x,y])=>P(`M${x-4} ${y}h9M${x} ${y-4}v9`,s,4)).join('');

function s1(){let s=frame(21,14,724,510);
 s+=P('M45 35V358M56 45V358M45 48H190M45 56H190M190 60V357',R,3)+B(66,63,187,357,'#a9abb0',5)+B(77,74,180,268,'#8b8e95',4)+B(77,275,122,352,'#8b8e95',4)+B(130,275,180,352,'#8b8e95',4)+nodes([[68,63],[105,72],[125,63],[187,63],[66,137],[185,137],[66,208],[185,208],[66,270],[126,270],[185,290],[66,315],[126,315],[85,357],[126,355],[185,315]])+bubs([[68,35],[125,35],[182,35]])+[65,137,208,270,315,355].map(y=>bub(43,y)+bub(213,y)).join('')+D(160,335,188,360,R,14,4);
 s+=P('M222 45V357M232 45V357M222 48H362M222 56H362',R,3)+F(238,60,362,355,'#1c3440');for(let x=244,i=0;x<362;x+=7,i++)s+=P(`M${x} 60V355`,i%3==0?'#9aa0a6':i%3==1?'#1a8fa0':'#3a6f7d',2);s+=[240,297,353].map(x=>P(`M${x} 60V355`,Wt,6)).join('')+B(237,60,363,356,'#2a8ea0',4);
 [62,97,133,168,205,238,270,302,355].forEach((y,i)=>{s+=P(`M236 ${y}H362`,R,3);if(i%2||y==302)for(let x=247;x<350;x+=24)s+=D(x,y-14,x+14,y+15,'#c8c41c',12,4)+D(x,y-12,x+14,y+12,R,6)});s+=bubs([[240,33],[297,33],[353,33]]);
 s+=P('M372 41H474M474 30V48',C,4)+F(382,55,468,92,'#255c1c')+D(380,48,468,92,G,40,4)+D(382,58,468,92,Y,14)+P('M383 96H470',Wt,4)+D(497,45,522,80,G,28,4)+`<ellipse cx="512" cy="91" rx="26" ry="5" fill="${M}"/>`+P('M385 140q10-24 20-20h85',G,3)+D(445,118,480,132,Y,8)+P('M400 118h60',C,3);
 s+=F(375,145,485,193,'#1f4d1a')+B(375,145,485,193,G,4)+P('M375 155H485M375 167H485M375 178H485M395 145V193M425 145V193M455 145V193',Y,3)+N(377,161,483,G)+N(377,186,483,G)+N(410,200,452,C)+N(378,225,410,'#c8403a')+N(378,241,402,R);
 s+=P('M394 272L440 236',Y,3)+P('M400 266L430 244M408 270l22-18',C,6)+N(400,279,445,G,9)+N(385,286,445,G,5)+D(382,285,395,300,Y,9,4);
 for(let i=0;i<20;i++)s+=N([540,650,535,560,535,612,540,550,600,535][i%10],36+i*7.7|0,705,i%4==2?'#1ad04a':'#28b9cf',5,i%2?3:4);s+=N(650,197,700,Wt)+P('M528 147l60 4 30-6',R,3);
 for(let i=0;i<12;i++)s+=N([560,535,570,515,540,520,505,480,445,510,500,512][i],206+i*7.4|0,706,'#1bbf2a',5,4);
 s+=P('M370 345L437 320L517 345',Wt,5)+P('M368 358L437 344L517 360',Wt,5)+D(368,326,412,342,Y,16,4)+D(470,326,518,342,Y,16,4)+D(405,306,475,322,R,20,4)+D(385,300,515,318,G,14,4)+P('M368 345V358M517 345V358',R,3)+P('M385 370H497',G,7)+P('M378 318h35M465 318h45',R,4);
 s+=B(556,322,692,464,'#a89428',4)+P('M630 335V393H670V382M622 340V390',C,6)+P('M636 340v45h35',Wt,3)+D(618,340,630,390,'#d87b50',8)+N(595,407,685,C,8,5)+N(570,424,684,O,6)+N(588,440,675,C,7,5);
 s+=B(331,418,534,482,'#a89428',4)+N(485,435,525,Y,6)+N(337,447,526,Y,8,5)+N(345,453,520,Y,4,3)+N(470,463,524,Y,6)+B(215,393,285,432,'#c9c61a',5)+B(215,443,285,481,'#c9c61a',4)+B(221,448,279,475,'#c9c61a',4)+P('M210 388V488M298 425v60M215 437h70M223 453h50M223 470h50',R,3).replace('/>',' stroke-dasharray="4 5"/>')+N(235,487,268,G,6)+N(210,488,235,Y)+N(105,376,150,G,4)+N(252,375,342,G,6)+N(265,385,335,R,4);return s+tblock(37,401)}
function hall(x,X,y,by){return P(`M${x} ${y-50}H${X+15}M${x} ${y-43}H${X+15}`,R,5)+P(`M${X+18} ${y-50}V${by}`,'#4d4349',3)+bubs([[x,y-68],[(x+X)/2,y-68],[X,y-68]])+P(`M${x} ${y-50}V${y}M${(x+X)/2} ${y-50}V${y}M${X} ${y-50}V${y}`,'#7c2028',2)+truss(x,X,y,y-42)+col(x,y,by)+col(X,y,by)+tags(x-26,[y-54,y-14,by-8])+P(`M${x-10} ${by}H${X+8}`,'#a01820',3)}
function s2(){let s=frame(14,14,718,516);s+=hall(63,289,103,248)+col(176,103,248)+X(178,105,287,247,'#b6b8be',7)+F(226,170,238,182,Wt)+yt(218,147,24,8)+lab(78,239,158)+P('M83 224v7',Y,4);
 s+=hall(348,574,105,252)+P('M350 160H572M350 167H572',R,5)+col(461,160,252)+yt(322,150,14,6)+F(345,155,355,172,Wt)+F(456,155,466,172,Wt)+F(569,155,579,172,Wt)+lab(362,242,442)+P('M367 228v7',Y,4);
 s+=hall(197,423,346,488)+P('M310 346V488',Gy,2)+lab(328,475,404)+F(331,460,342,472,G);
 s+=P('M632 42V95M638 42V95M625 123H690',G,4)+D(632,42,678,112,G,32,4)+D(648,40,664,75,Wt,10)+P('M640 106h40M655 80h22',Wt,3)+N(625,122,688,C,6);
 s+=D(48,318,130,345,G,12)+D(58,272,170,290,R,10)+N(60,272,85,Wt,4,3)+N(130,316,172,G,4,3)+P('M48 292H135M48 322H135M48 292V322M135 292v30',C,4)+P('M60 300H125M92 300l25 45M100 292v60M75 318l20 22',R,5)+P('M102 335v20M88 363h46',Bl,4)+P('M88 366h46',Wt,2);
 s+=B(447,311,637,397,'#596069')+B(638,311,714,391,'#596069')+B(463,405,580,491,'#596069')+B(580,405,712,491,'#596069')+P('M458 327H620M458 347H620V355H458V325',R,3)+P('M470 335h140M510 327l-12 24',Gy,3)+N(497,382,555,Bl,6,5)+D(456,330,468,352,R,7,4)+D(600,328,624,354,O,10,4)+P('M657 315V360H666M666 315l12 0 14 40',Wt,3)+D(655,315,700,358,O,8)+N(645,377,705,Bl,6,5)+P('M483 430l55-15 3 15-53 15z','#8a4048',3)+P('M480 455h90M485 460l40-12',R,4)+N(508,477,542,Bl,6)+N(500,413,530,Gy)+D(608,413,636,434,R,18,5)+D(612,415,632,434,Y,8)+P('M600 440l30-10M640 450l14-10 12 10-14 14zM655 436l25-18',Gy,3)+D(664,415,685,440,O,9);return s+tblock(31,401)}
function s3(){let s=frame(12,14,714,510);s+=hall(62,289,116,262)+col(176,116,262)+X(66,120,172,168)+X(66,178,172,258)+P('M62 170H289M62 177H289',R,4)+yt(108,124,22,8)+F(112,166,130,173,G)+F(226,166,244,173,G)+yt(108,194,22,8)+P('M256 215H289',R,6)+col(260,217,262,6)+tags(36,[160])+lab(78,289,152)+P('M81 276v7',Y,4);
 [32,150,267].forEach((y,k)=>{s+=P(`M398 ${y}V${y+106}M487 ${y}V${y+106}M548 ${y}V${y+106}M620 ${y}V${y+106}M690 ${y}V${y+106}`,'#9a9da3',2)+P(`M392 ${y+14}H702M392 ${y+20}H702M392 ${y+32}H702M392 ${y+60}H702`,R,4)+bubs([[400,y],[485,y],[548,y],[619,y],[690,y]])+[485,548,620,690].map(x=>col(x,y+34,y+106,5)).join('')+col(438,y+70,y+106,5)+P(`M398 ${y+34}H702M398 ${y+54}H702M398 ${y+106}H702`,'#8f7d80',3)+P(`M400 ${y+72}H484`,R,5)+X(552,y+60,616,y+106,R,4)+tags(374,[y+22,y+52,y+74,y+96])+P(`M625 ${y+30}h20M632 ${y+60}h10`,Wt,4);
 [424,506,572,644].forEach(x=>{s+=k==2?yt(x,y+27,22,14)+yt(x,y+54,20,6):yt(x,y+30,22,6)+D(x,y+38,x+22,y+54,'#93b021',7,4)+yt(x,y+54,20,6)});if(k<2)s+=X(446,y+72,480,y+104,R,4)+N(510,y+94,548,Y,5)+P(`M490 ${y+99}h60`,G,4)+yt(452,y+74,18,6);if(k==1)s+=P('M414 256v-24M405 240h10',Wt,4);if(k==2)s+=[402,486,550,620,690].map(x=>F(x,y+30,x+6,y+52,Y)).join('')});
 s+=P('M525 376H662',Y,5)+N(525,380,662,Y,6)+N(530,387,655,G,5);
 s+=B(193,391,293,495,'#1aa84a',4)+P('M193 412q30 10 45 10t30 8q14 4 28-14M193 422q35 5 50 12t14 20q-12 15-10 38M205 430q20-10 30-8v20M272 430q-2 20-10 28t-4 34M248 485h50',G,4)+P('M210 440h28',R,4)+N(295,408,320,Y,8)+N(300,481,318,Y);
 s+=B(350,405,580,492,'#3f5a78',2)+F(362,408,418,422,R)+D(355,415,430,488,R,40,5)+P('M365 422v65M400 422v65M365 440h50M365 470h50',Bl,5)+P('M383 440v25M393 440v25M378 440h20M378 465h20',Wt,5)+B(445,432,462,460,Y,4)+B(473,432,488,460,Y,4)+B(505,438,545,460,Y,4)+D(442,428,465,465,Y,8,4)+D(470,428,494,465,Y,8,4)+D(500,430,550,465,Y,12,4)+P('M555 465h22V425',O,6)+[440,468,506,548].map(x=>N(x,472,x+26,G,7)).join('')+N(590,440,658,G,9,5)+N(648,418,700,Wt,4,3)+N(650,428,695,Wt,4,3)+P('M642 420l6 50M605 455l18 10',R,3)+P('M590 470h80',Y,5)+P('M590 481h22M665 481h22',Wt,6)+N(595,474,680,Wt,6,4);return s+tblock(28,401)}
function det(x,y,X2,Y2){const m=(y+Y2)/2;return `<rect x="${x}" y="${y}" width="${X2-x}" height="${Y2-y}" rx="15" fill="none" stroke="#a8141e" stroke-width="3"/>`+P(`M${x} ${m+6}H${X2}M${x} ${m+14}H${X2}`,R,8)+D(x,y,X2,Y2,R,30,5)+P(`M${x+4} ${m-8}H${X2-4}M${x+4} ${m+26}H${X2-4}`,Wt,4)+D(x+5,y+5,X2,Y2,O,10,4)}
function tee(x,y){return P(`M${x-9} ${y}h20M${x} ${y}v12`,Wt,4)+yt(x-20,y-14,32,11)}
function s4(){let s=frame(14,14,716,510);
 s+=det(72,62,200,135)+det(230,70,350,130)+det(440,45,492,115)+det(248,395,342,455)+det(500,222,572,290)+det(390,370,518,455);
 s+=P('M135 40v90M108 65v60',R,7)+P('M112 70h46v36l-22 20-24-20z',O,3)+`<circle cx="137" cy="106" r="10" fill="none" stroke="${R}" stroke-width="4"/>`+P('M135 45v18M140 45v20',Wt,4);
 s+=P('M535 45q0-5 15-5h130q15 0 15 15v65q0 15-15 15h-60l-85-40z',R,3)+P('M540 60L690 125M545 48L692 105M540 82L660 132',R,8)+P('M540 72L692 132M560 80v55M568 80v55M625 45v40',Wt,4)+P('M600 50l20 40 60 10',O,4)+D(540,50,690,130,R,40,6)+D(550,60,690,125,Y,12);
 s+=`<rect x="40" y="203" width="215" height="138" rx="20" fill="none" stroke="#a8141e" stroke-width="3"/>`+P('M42 212L170 240M45 225L235 292M42 290H235M150 222l80 25M65 205l55 15v45',R,7)+P('M42 238L120 268M42 282H235M42 300H235M165 300V340M183 300V340',Wt,5)+P('M90 212l25 5-10 50M190 272h45v10',G,4)+B(132,255,146,268,O,4)+D(50,210,235,300,R,30,5)+D(60,230,235,300,O,14)+D(155,300,195,340,R,12,5);
 s+=P('M285 262L440 262M285 300L440 220M290 220L440 305M365 195V310M335 310l30-55 30 55M330 215l35 40 40-60',R,8)+P('M285 282l60-20M440 285l-60-22M300 305l50-42M425 308l-48-45M362 312v-40M370 312v-40',Wt,5)+D(285,220,440,305,O,18,4)+D(285,225,440,305,R,34,5)+`<circle cx="365" cy="257" r="11" fill="#212830" stroke="#e06068" stroke-width="4"/><circle cx="450" cy="426" r="12" fill="#401018" stroke="#e08088" stroke-width="4"/>`+P('M449 362v40M457 362v40',Wt,4)+P('M395 378v30h120v-30',G,3)+P('M232 122V70M240 110h95v-20',O,4)+P('M312 98l40 25M316 90l36 24',Wt,5);
 s+=`<circle cx="608" cy="228" r="22" fill="none" stroke="${G}" stroke-width="3"/><circle cx="608" cy="228" r="30" fill="none" stroke="#a8141e" stroke-width="2"/>`+B(596,216,620,240,O,5)+D(590,210,628,248,O,16,4)+D(590,210,628,248,G,10,4)+D(585,262,650,282,G,28,4);
 [[75,52],[50,112],[228,48],[370,60],[370,100],[418,62],[415,102],[470,222],[470,262],[472,290],[530,148],[235,378],[365,428],[485,365],[543,428],[278,318],[215,320],[655,195]].forEach(p=>s+=tee(...p));
 [[35,85,24,18],[70,60,30,7],[155,88,26,8],[270,104,30,8],[355,45,32,10],[355,75,32,14],[500,30,30,20],[33,172,28,20],[282,200,34,18],[395,195,28,18],[455,250,26,20],[198,333,38,14],[368,358,40,8],[385,372,32,18],[200,440,30,16],[208,308,28,22],[635,240,44,10],[632,175,28,10],[115,145,36,5],[130,130,50,6],[470,395,24,7],[280,422,26,7],[345,285,24,6],[150,265,26,6],[455,50,30,6],[535,400,26,14],[400,88,30,14],[350,400,30,10]].forEach(p=>s+=yt(...p));
 s+=`<g fill="none" stroke="${G}" stroke-width="4"><circle cx="530" cy="38" r="9"/><circle cx="68" cy="176" r="9"/><circle cx="432" cy="199" r="9"/></g>`;
 [[100,168],[235,162],[430,138],[568,155],[60,358],[330,330],[505,310],[250,475],[420,478]].forEach(([x,y])=>s+=N(x+10,y-7,x+60,Y,8,4)+P(`M${x} ${y}h72`,G,4)+N(x+4,y+12,x+78,Y,8,4));
 s+=P('M593 310V455M603 310V455M664 390V455M673 390V455',G,4)+P('M598 310v145',Y,3)+N(590,294,630,C,9)+N(600,305,640,C,6)+D(570,453,624,482,Wt,30,5)+D(648,453,692,482,Wt,24,5)+D(570,455,690,482,'#b0443c',14)+N(540,450,568,C,9)+N(625,450,650,C,7)+N(665,382,702,C,9)+N(560,484,632,Y,6)+N(650,484,690,O,5)+P('M625 350h28M625 372h28M632 345v30M647 345v30M682 422h22M684 412v20',G,3)+N(610,330,650,G,6)+P('M530 492h120',Bl,2);return s+tblock(31,401)}
function s5(){let s=frame(14,6,718,504);s+=[[70,184],[222,338],[383,498]].map(([a,b],i)=>{const t=i==2?150:96;return P(`M${a} ${t}H${b}`,i==2?R:Wt,7)+col(a,t,242,8)+col(b,t,242,8)+P(`M${a} 243H${b}`,R,3)+tags(a-24,[t-14,235])+(i<2?bubs([[a,74],[b,74]]):'')}).join('');
 s+=X(74,103,182,150)+X(74,162,182,242)+P('M70 152H184M70 159H184',R,4)+X(226,102,336,242,R,7)+X(386,155,496,242)+yt(117,108,20,6)+yt(117,176,20,7)+yt(275,139,22,7)+yt(427,172,22,7)+F(123,151,138,156,G)+yt(46,145,14,6)+nodes([[74,103],[180,103],[74,155],[180,155],[74,238],[180,238],[228,238],[334,238],[387,238],[492,238],[228,102],[334,102]],Wt);
 [[108,266],[262,263],[416,263]].forEach(([x,y])=>s+=N(x+3,y-6,x+30,C,6,5)+P(`M${x} ${y}h66`,C,4)+N(x+42,y-6,x+64,Wt,6));
 s+=P('M430 30l30 20 25-5M440 80l5-35h22l4 35M455 50v30',C,5)+D(430,28,485,60,G,16,4)+F(472,38,486,52,Y)+P('M427 85V62M480 85V62',G,3)+P('M425 88H482',Y,7)+N(428,104,478,G,5)+P('M425 95H482',C,3);
 s+=B(538,28,697,121,'#9a8626',4)+B(588,42,636,80,'#8c8f95',3)+D(592,38,634,78,'#c87a60',18)+D(592,38,634,78,O,10)+P('M545 84h35l8 8h48l6-8h45',G,3)+P('M588 82h48',Wt,3)+N(590,103,640,Gy)+P('M600 108h45',C,2)+N(650,60,680,O,4,3)+N(540,84,580,Y,4,3)+N(655,88,690,G,6);
 s+=B(526,128,697,254,'#9a8626',4)+`<circle cx="588" cy="160" r="18" fill="none" stroke="${G}" stroke-width="5"/>`+D(575,145,605,175,Y,14,4)+F(574,178,605,192,'#18b82c')+P('M562 222L648 178M570 230L660 184',C,4)+P('M575 220l66-34',C,9)+P('M645 176h40',C,6)+N(645,182,678,Wt,5)+N(675,167,688,Y,4)+N(535,226,555,Y,4)+P('M530 230q40-10 80 5',G,4)+N(567,240,590,Wt);
 s+=P('M287 372V455M300 372V455M280 460h48M297 412h42',R,6)+P('M305 400l28-22M305 420l30 25',O,5)+D(290,375,340,455,Wt,16)+P('M324 382l16-18',Wt,8)+P('M280 460h48',Bl,3)+D(305,385,335,450,Y,9)+P('M370 368V415M355 421h45M376 390h28',R,5)+P('M378 410l30-30M378 385l20 20',Y,4)+D(366,370,410,415,R,16,5)+D(366,370,410,415,Wt,7,3)+P('M355 423h50',Bl,3)+P('M510 325l40 50M530 315l30 40M512 365l45-30',R,7)+D(508,318,568,375,Y,18,4)+D(515,320,560,370,G,8)+D(512,325,560,370,R,14,5)+P('M540 382h-30',Bl,3);
 [[418,368,508,390],[415,394,562,423],[365,433,536,462]].forEach(([a,b,x,y])=>{for(let k=a;k<x-8;k+=11)for(let j=b;j<y-4;j+=8)s+=F(k,j,k+8,j+5,k<a+12?Y:(j+k)%3?'#d8d8a0':Bl);s+=B(a,b,x,y,'#9b9833',2)});
 s+=P('M597 345V432M606 345V432M657 345V432M664 345V432M597 345H664M597 352H664',C,5)+X(606,355,657,430,'#8e959d',6)+F(622,353,642,360,Y)+F(570,356,597,366,G)+F(588,382,604,393,G)+B(590,435,672,453,O,4)+N(612,428,650,G,8)+P('M590 440h80',G,4)+P('M612 333h50M612 340h50',Wt,4)+D(645,315,662,334,Y,9,4)+P('M620 290h60M582 352v-10q0-14 14-14t20 14',R,4)+P('M630 297l12 13-12 13-12-13z',Wt,4)+P('M630 303v14M623 310h14',M,3)+P('M583 360v65q0 12 14 12',R,3)+P('M602 466h55',C,4)+N(615,459,658,Wt,6);return s+tblock(31,397)}
function s6(){let s=frame(14,4,718,503);s+=P('M88 50V358M145 50V358M202 50V358M70 68H205M70 139H205M70 210H205M70 274H205M70 319H205M70 358H205',Gy,2)+P('M76 60V362M86 60V362M82 60H202M82 68H202M82 76H202M202 75V110M196 130V215M88 130v90M88 265v40M195 265v60M75 360H202',R,4)+nodes([[92,139],[92,210],[145,274],[145,319],[200,139],[200,210],[92,274],[92,319],[200,319],[145,358]])+D(176,332,206,362,R,18,4)+D(180,335,206,360,Wt,5)+bubs([[88,40],[145,40],[202,40]])+[68,139,210,274,319,358].map(y=>bub(60,y)).join('')+N(115,376,188,G,6)+P('M110 372h78',O,2);
 [[245,0],[333,0],[408,0]].forEach(([x])=>s+=F(x+2,69,x+50,79,'#25b98c')+P(`M${x+25} 35V68M${x+20} 38h30l20-9M${x+2} 55h50M${x-4} 42h20`,G,4)+N(x+5,32,x+40,G,4,3)+P(`M${x} 69h50`,O,3));
 s+=P('M240 88V165M395 88V165M408 88V165',G,4)+P('M248 108h25v28h-25M240 112h30M240 132h30M415 108h30v28h-30M408 112h34M408 132h34','#4d9c34',4)+P('M300 88h35v75h-35zM470 88h38v75h-38z','#6d8f3c',3)+D(302,85,350,160,G,22,4)+D(302,85,345,160,Y,10,4)+D(465,85,515,160,G,24,4)+D(470,85,525,160,Y,12,4)+P('M310 108l50-18M310 150l40 2M480 95l55 20M480 150l50 15M310 100h55M320 130h30',Y,3)+P('M235 185h70',G,6)+P('M414 178H482',G,9)+N(415,168,480,C,5);
 s+=P('M577 38H687',C,4)+P('M582 65l20-25 20 25 20-25 20 25 12-25',C,5)+P('M577 70h98',R,3)+N(625,32,650,Y)+N(665,77,687,O)+P('M575 35v35',C,4);
 s+=P('M566 116H695M566 124H695',O,6)+P('M570 154l16-26 16 26 16-26 16 26 16-26 16 26 16-26M566 156H695',C,4)+F(622,112,637,150,'#d85c38')+P('M568 110V165M690 110V165M600 102h65l-35-12z',Y,3)+N(612,92,650,G,6)+N(598,178,658,G,9,5)+D(570,106,690,130,'#e0a030',16,4);
 s+=B(230,197,340,232,'#c2b37c',3)+P('M230 206H340M230 216H340M230 224H340M275 197V232M290 197V232M305 197V232M322 197V232',O,3)+N(233,222,272,G)+N(276,212,338,Y,3)+B(386,190,452,244,'#a8865c',4);for(let i=0;i<6;i++)s+=P(`M390 ${196+i*8}h58`,'#cfc034',5).replace('/>',' stroke-dasharray="12 4"/>');
 s+=F(530,184,680,248,'#14d4de')+[545,600,652].map((x,i)=>F(x,212,x+(i==2?8:26),231,'#16323c')).join('')+P('M590 184V248',O,3)+P('M530 184H700',G,4)+D(658,184,708,245,Y,16,3)+P('M660 184h45M660 206h40M660 222h40M660 242h45',G,3)+D(680,180,708,245,G,10)+N(556,262,620,Y,6)+P('M556 264h64',Wt,3)+F(592,218,605,228,G);
 s+=B(426,278,705,352,'#8e1520',4)+F(460,292,680,320,'#571023')+P('M460 290H680M460 297H680M460 320H680M460 308H680',R,4)+P('M475 286H520M595 286H660',Y,4).replace('/>',' stroke-dasharray="7 5"/>')+D(435,290,462,318,'#c87058',9,4)+D(670,290,702,315,'#c87058',9,4)+P('M490 304l20 8h20M620 312l20-12h25',O,4)+P('M465 304H675','#8a2a90',3)+P('M466 332H670',G,5)+N(540,345,615,G,8,5)+N(645,342,702,R);
 s+=P('M240 262H370M240 268V360M250 268V360M260 262V358M307 262V358M368 262V358M240 275H360M240 318H360M240 358H360',R,5)+bubs([[252,246],[308,246],[364,252]])+[274,319,358].map(y=>bub(225,y)).join('');for(const [x,y] of [[280,296],[333,296],[280,338]])s+=P(`M${x-14} ${y+6}h28M${x} ${y-12}v24M${x-8} ${y}h16`,'#3fa043',5)+P(`M${x-22} ${y-8}v16M${x+22} ${y-8}v16M${x-8} ${y-26}h16M${x-8} ${y+20}h16`,Y,5);s+=P('M315 345h22v12M322 335h35M365 290v12M335 275h12M318 357h24',Y,6)+`<circle cx="357" cy="350" r="11" fill="none" stroke="${Y}" stroke-width="5"/>`+P('M282 374h60',G,3)+N(282,372,340,O);
 s+=F(296,423,314,462,Y)+P('M245 425H315M248 460H315M248 425V462',Y,6)+P('M250 455l15-25 14 28 16-28',Y,4)+P('M255 458l12-18 12 18',G,5)+N(232,411,300,Y,6)+P('M242 402H310M275 402v24',Y,3)+N(303,412,332,G)+N(240,472,318,G,9,5)+N(245,482,310,C,4);
 s+=F(359,424,478,462,'#c5c95a')+P('M360 455l15-25 15 25 15-25 15 25M425 455l15-25 15 25 15-25','#1c5c24',6)+F(405,424,424,460,'#e8e8e0')+P('M358 424H478',Wt,4)+P('M358 462H478M358 402H470',Y,4)+N(345,413,475,Y,8)+P('M385 400v24M415 400v20M448 400v24',G,4)+N(378,472,455,G,9,5)+N(395,482,440,Y,4);
 [0,94].forEach(d=>{s+=P(`M${494+d} 365l112 96M${506+d} 362l100 85`,'#b0528c',4)+P(`M${488+d} 378l112 105M${482+d} 388l108 100`,'#a8a41c',4)+P(`M${500+d} 375l10 2 2 10 12 2 2 12 12 2 2 10 12 4 2 12 12 2 3 12`,'#d07a94',3)+D(478+d,370,500+d,395,Y,8)+P(`M${510+d} 372l30 8M${560+d} 410l25-8M${590+d} 440l20-6M${590+d} 485l16-10`,'#8fa03c',3)+F(545+d,378,562+d,390,'#9c6c30')+D(580+d,460,606+d,485,Y,7)});return s+tblock(31,397)}
const g=(x,y,f)=>`<g transform="translate(${x} ${y}) scale(.33333)">${f()}</g>`;
document.getElementById('dwg').innerHTML=g(355,220,s1)+g(602,220,s2)+g(848,220,s3)+g(1092,220,s4)+g(602,388,s5)+g(602,554,s6)+'<path d="M1385.500 626v34M1385.500 666v35.500M1348 663.500h35M1388 663.500h35.500M1383.500 661.500h4v4h-4z" stroke="#d5d8dc" fill="none"/>';
</script>
</body>
</html>
